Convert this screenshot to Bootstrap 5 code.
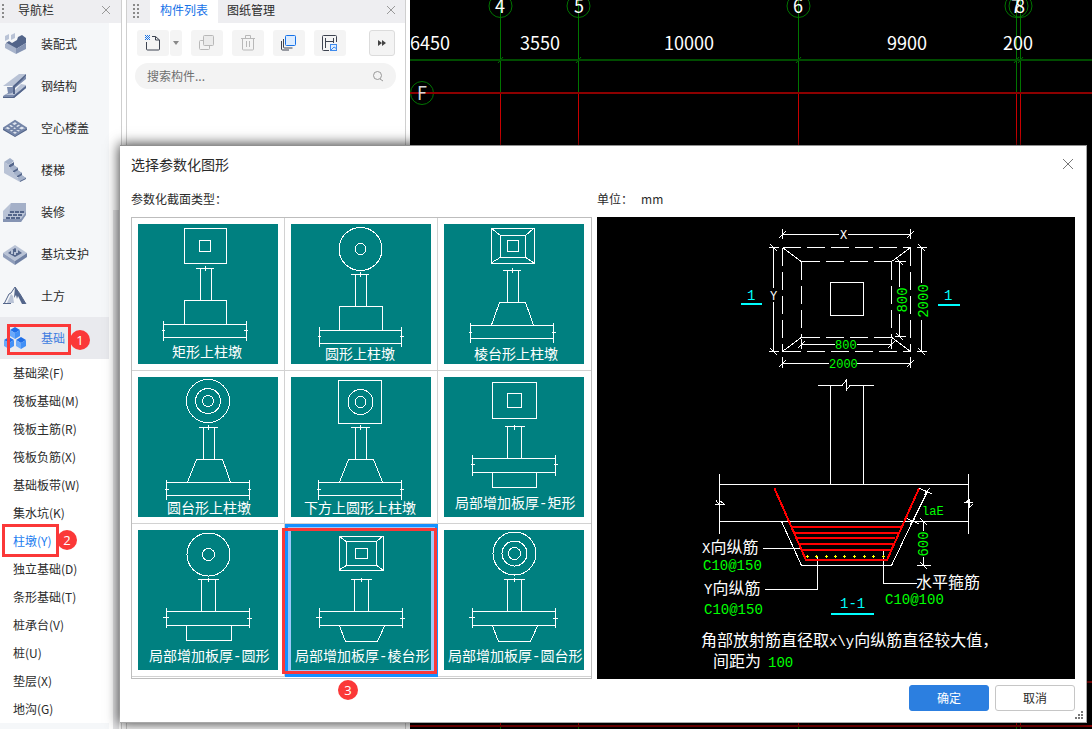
<!DOCTYPE html>
<html lang="zh-CN">
<head>
<meta charset="utf-8">
<meta name="viewport" content="width=device-width, initial-scale=1">
<title>选择参数化图形</title>
<link href="https://cdn.jsdelivr.net/npm/bootstrap@5.3.0/dist/css/bootstrap.min.css" rel="stylesheet">
<style>
  body { font-family: "Noto Sans CJK SC", sans-serif; font-size: 12px; line-height: 18px; color: #2b2b2b; background: #fff; }
  button, input { font: inherit; color: inherit; }
  a { color: inherit; text-decoration: none; }
  svg { display: block; }
  .strip { height: 23px; background: #eeeef1; flex: none; padding-bottom: 4px; }
  .plain-btn { border: 0; background: none; padding: 0; line-height: 1; }
  .nav-pane { width: 122px; border-right: 1px solid #cfcfcf; }
  .nav-list { width: 109px; background: #f5f7f9; }
  .nav-row { height: 42px; padding-left: 3px; gap: 14px; }
  .nav-row.current { background: #e9eaee; color: #3f7de0; }
  .sub-list { background: #fff; }
  .sub-list a { display: block; height: 28px; line-height: 28px; padding-left: 13px; white-space: nowrap; }
  .sub-list a.current { color: #1a7cf0; }
  .gutter-thumb { width: 6px; margin-top: 187px; background: #e4e4e6; }
  .list-pane { width: 280px; margin-left: 4px; border-left: 1px solid #cfcfcf; border-right: 1px solid #cfcfcf; }
  .tab-link { padding: 0 9px 4px 9px; margin-bottom: -4px; display: flex; align-items: center; }
  .tab-link.current { background: #fff; color: #1672e8; padding-left: 10px; padding-right: 10px; }
  .tool-row { padding: 7px 10px 0 10px; gap: 9px; }
  .tool-pair { gap: 1px; }
  .tool { width: 32px; height: 26px; border: 0; border-radius: 3px; background: #f4f4f4; padding: 0; display: flex; align-items: center; justify-content: center; }
  .tool.drop { width: 12px; }
  .tool.more { width: 26px; border: 1px solid #dcdcdc; }
  .search-box { margin: 7px 9px 0 8px; height: 26px; border-radius: 13px; background: #f3f3f3; padding: 0 12px; }
  .search-box input { border: 0; background: none; outline: 0; padding: 0; min-width: 0; }
  .search-box input::placeholder { color: #6f6f6f; opacity: 1; }
  .cad { background: #000; margin-left: 4px; min-width: 0; }
  .cad svg { width: 100%; height: 100%; }
  .dialog-box { position: absolute; left: 120px; right: 5px; top: 145px; background: #fff; border: 1px solid #a8a8a8; border-left: 0; border-top-color: #8f8f8f; box-shadow: 0 0 12px 1px rgba(0,0,0,.75); padding: 0 11px; }
  .dialog-head { height: 38px; padding-bottom: 2px; font-size: 14px; line-height: 20px; }
  .dialog-labels { height: 33px; padding-bottom: 4px; }
  .dialog-foot { padding: 6px 0 11px; gap: 6px; }
  .label-left { width: 466px; }
  .thumbs { width: 461px; flex: none; border: 1px solid #bdbdbd; display: grid; grid-template-columns: 153px 153px 1fr; grid-auto-rows: 153px; position: relative; }
  .shape-btn { border: 0; border-right: 1px solid #d2d2d2; border-bottom: 1px solid #d2d2d2; background: #fff; padding: 6px 0 0 6px; display: flex; align-items: flex-start; }
  .shape-btn:nth-child(3n) { border-right: 0; }
  .shape-btn.chosen { border: 3px solid #1590ff; background: #9cc9fb; padding: 3px 0 0 3px; }
  .shape-btn svg { width: 140px; height: 140px; flex: none; background: #008080; fill: none; stroke: #fff; shape-rendering: crispEdges; }
  .shape-btn text { fill: #fff; stroke: none; font: 400 14px "Liberation Mono", "Noto Sans CJK SC", monospace; }
  .preview { background: #000; height: 462px; min-width: 0; margin-left: 5px; }
  .preview svg { width: 100%; height: 100%; }
  .preview text { font: 400 14px "Liberation Mono", "Noto Sans CJK SC", monospace; stroke: none; }
  .preview .zh { font-size: 16px; }
  .preview .tiny { font-size: 12px; }
  .action { width: 80px; height: 26px; border-radius: 3px; padding: 0; font-size: 12px; line-height: 18px; }
  .action.ok { background: #2c7fe0; border-color: #2c7fe0; color: #fff; }
  .action.cancel { background: #fff; border-color: #c6c6c6; color: #2b2b2b; }
  .frame-mark { position: absolute; border: 3px solid #fb3838; pointer-events: none; }
  .step-mark { position: absolute; width: 20px; height: 20px; border-radius: 50%; background: #fb3838; color: #fff; font-family: "Open Sans", sans-serif; font-size: 13px; line-height: 20px; text-align: center; }
  .mark-1 { left: 7px; top: 7px; width: 64px; height: 31px; }
  .step-1 { left: 70px; top: 13px; }
  .mark-2 { left: 2px; top: -3px; width: 57px; height: 33px; }
  .step-2 { left: 57px; top: 3px; }
  .mark-3 { left: 150px; top: 310px; width: 155px; height: 146px; }
  .step-3 { left: 206px; top: 462px; }
  .grip { position: absolute; right: 3px; bottom: 3px; }
</style>
</head>
<body class="overflow-hidden">
<div class="d-flex vh-100 position-relative overflow-hidden">

  <nav class="nav-pane d-flex flex-column flex-shrink-0">
    <div class="strip d-flex align-items-center">
      <svg width="6" height="18" fill="#8a8a8a"><path d="M2 3h2v2H2zM2 7h2v2H2zM2 11h2v2H2zM2 15h2v2H2z"/></svg>
      <span class="ms-2 ps-1">导航栏</span>
      <button class="plain-btn ms-auto me-2" aria-label="关闭导航栏"><svg width="12" height="10" stroke="#999" fill="none"><path d="M1 1l8 8M9 1l-8 8"/></svg></button>
    </div>
    <div class="d-flex flex-grow-1">
      <div class="nav-list">
        <a href="#" class="nav-row d-flex align-items-center">
          <svg width="24" height="24"><path fill="#b9c3d6" d="M2 4l4-2v5l-4 2zM8 3l4-2v5l-4 2z"/><path fill="#53658a" d="M3 11l3-2 3 2 5-3 1-3 4-2 4 3v5l-10 6-10-5z"/><path fill="#a8b4cb" d="M2 12l2-1 9 5v6L2 16z"/><path fill="#8594b3" d="M13 17l10-6v6l-10 5z"/></svg>装配式</a>
        <a href="#" class="nav-row d-flex align-items-center">
          <svg width="24" height="24"><path fill="#b9c3d6" d="M0 12L16 0h7l-9 12H4z"/><path fill="#7c8cae" d="M4 13h5l14-11v3L12 14v6l11-9v3L11 24H0v-2l5-3z"/><path fill="#b9c3d6" d="M9 19l9-9 5 1-12 10H1z"/><path fill="#53658a" d="M12 13L23 2V0L10 12v8h2zM11 22l12-10v2L11 24H0v-1h10z"/></svg>钢结构</a>
        <a href="#" class="nav-row d-flex align-items-center">
          <svg width="24" height="24"><path fill="#53658a" d="M0 12l12 7 12-7v2l-12 7-12-7z"/><path fill="#dfe5ee" stroke="#7485a8" stroke-width="2" d="M1 12l11-7 11 7-11 7zM5 10l11 7M8 8l11 7M5 15l11-8M8 17l11-8"/></svg>空心楼盖</a>
        <a href="#" class="nav-row d-flex align-items-center">
          <svg width="24" height="24"><path fill="#b9c3d6" d="M1 4l5 3v3l4 2v3l4 2v3l3 1v3L1 15z"/><path fill="#53658a" d="M6 7l5-3v4l4 2v3l4 2v3l4 2v1l-6 3v-4l-3-1v-3l-4-2v-3l-4-2z"/><path fill="#a5b2ca" d="M1 4l6-4 4 3-5 4zM6 10l5-3 4 3-5 3zM10 15l5-3 4 3-5 3zM14 20l5-3 4 3-6 3z"/></svg>楼梯</a>
        <a href="#" class="nav-row d-flex align-items-center">
          <svg width="24" height="24"><path fill="#b9c3d6" d="M0 11l8-8h15v11l-5 8H0z"/><path fill="#8594b3" d="M8 3h15v10H6z" opacity=".4"/><path fill="#8594b3" d="M0 19h18l5-7v3l-5 7H0z"/><path stroke="#53658a" stroke-width="2" stroke-dasharray="4 1" d="M7 12h14M5 15h14M3 18h14"/></svg>装修</a>
        <a href="#" class="nav-row d-flex align-items-center">
          <svg width="24" height="24"><path fill="#b9c3d6" d="M0 11l12-8 12 8-12 8z"/><path fill="#8f9dba" d="M0 11l12 8v4L0 15z"/><path fill="#6f80a3" d="M24 11l-12 8v4l12-8z"/><path fill="#53658a" d="M5 11l7-5 7 5-7 4z"/><path fill="#b9c3d6" d="M8 8h2v4H8zM13 6h2v5h-2zM11 10h2v3h-2z"/></svg>基坑支护</a>
        <a href="#" class="nav-row d-flex align-items-center">
          <svg width="24" height="24"><path fill="#b9c3d6" d="M4 19l4-9 2 2 1 7z"/><path fill="none" stroke="#53658a" d="M1 20l5-10 2-1 4-6 5 7 6 10"/><path fill="#53658a" d="M12 3l5 7 6 10h-4l-4-8-1 3-1-4-2 3zM0 19h8v1H0z"/></svg>土方</a>
        <div class="position-relative">
          <a href="#" class="nav-row current d-flex align-items-center">
            <svg width="24" height="24"><path fill="#1f6fe8" d="M7 4l5-3 5 3-5 3zM1 14l5-3 5 3-5 3zM13 14l5-3 5 3-5 3z"/><path fill="#69a9fb" d="M7 4l5 3v6l-5-3zM1 14l5 3v6l-5-3zM13 14l5 3v6l-5-3z"/><path fill="#4290f6" d="M17 4l-5 3v6l5-3zM11 14l-5 3v6l5-3zM23 14l-5 3v6l5-3z"/></svg>基础</a>
          <span class="frame-mark mark-1"></span><span class="step-mark step-1">1</span>
        </div>
        <div class="sub-list">
          <a href="#">基础梁(F)</a>
          <a href="#">筏板基础(M)</a>
          <a href="#">筏板主筋(R)</a>
          <a href="#">筏板负筋(X)</a>
          <a href="#">基础板带(W)</a>
          <a href="#">集水坑(K)</a>
          <div class="position-relative"><a href="#" class="current">柱墩(Y)</a><span class="frame-mark mark-2"></span><span class="step-mark step-2">2</span></div>
          <a href="#">独立基础(D)</a>
          <a href="#">条形基础(T)</a>
          <a href="#">桩承台(V)</a>
          <a href="#">桩(U)</a>
          <a href="#">垫层(X)</a>
          <a href="#">地沟(G)</a>
        </div>
      </div>
      <div class="gutter-thumb ms-1"></div>
    </div>
  </nav>

  <section class="list-pane flex-shrink-0">
    <div class="strip d-flex">
      <svg class="align-self-center ms-1 me-2" width="11" height="18" fill="#8a8a8a"><path d="M2 3h2v2H2zM2 7h2v2H2zM2 11h2v2H2zM2 15h2v2H2zM6 3h2v2H6zM6 7h2v2H6zM6 11h2v2H6zM6 15h2v2H6z"/></svg>
      <a href="#" class="tab-link current">构件列表</a>
      <a href="#" class="tab-link">图纸管理</a>
      <button class="plain-btn ms-auto me-2" aria-label="关闭构件列表"><svg width="12" height="10" stroke="#999" fill="none"><path d="M2 1l8 8M10 1l-8 8"/></svg></button>
    </div>
    <div class="tool-row d-flex">
      <div class="tool-pair d-flex">
        <button class="tool" aria-label="新建"><svg width="18" height="18" fill="none" stroke="#3d4350"><path d="M2.500 8v7q0 1 1 1h11q1 0 1-1V6l-4-3.500H8M11.500 2.500V6h4"/><path stroke="#1672e8" stroke-dasharray="1 1" d="M1 1.500h5M2 2.500h4M1 3.500h5M2 4.500h4M1 5.500h5"/></svg></button>
        <button class="tool drop" aria-label="新建选项"><svg width="6" height="4"><path fill="#888" d="M0 0h6L3 4z"/></svg></button>
      </div>
      <button class="tool" aria-label="复制"><svg width="18" height="18" fill="#ebebeb" stroke="#b8b8b8"><rect x="1.500" y="6.500" width="10" height="9" rx="1" fill="none"/><rect x="5.500" y="1.500" width="10" height="10" rx="1"/></svg></button>
      <button class="tool" aria-label="删除"><svg width="18" height="18" fill="none" stroke="#b8b8b8"><path d="M2 4.500h14M6.500 4V1.500h5V4M3.500 5v10q0 1 1 1h9q1 0 1-1V5M7.500 7v6M10.500 7v6"/></svg></button>
      <button class="tool" aria-label="层间复制"><svg width="18" height="18" fill="none" stroke="#3d4350"><path d="M3.500 5v8q0 1 1 1h8M1.500 7v8q0 1 1 1H9"/><rect x="5.500" y="1.500" width="10" height="10" rx="1" stroke="#1672e8" fill="#dcecff"/></svg></button>
      <button class="tool" aria-label="存档"><svg width="18" height="18" fill="none" stroke="#3d4350"><path d="M8 16.500H2.500q-1 0-1-1v-13q0-1 1-1h12q1 0 1 1V8M4.500 4v10M4.500 7.500h8M12.500 4v5"/><rect x="9.500" y="10.500" width="6" height="6" stroke="#3f8aec" fill="#dcecff"/><path d="M10 16l3-3 3 2" stroke="#3f8aec"/></svg></button>
      <button class="tool more ms-auto" aria-label="更多"><svg width="8" height="6"><path fill="#444" d="M0 0l4 3-4 3zM4 0l4 3-4 3z"/></svg></button>
    </div>
    <div class="search-box d-flex align-items-center">
      <input class="flex-grow-1" type="text" placeholder="搜索构件..." aria-label="搜索构件">
      <svg width="12" height="12" fill="none" stroke="#999"><circle cx="5.500" cy="5.500" r="4"/><path d="M8 9l3 2"/></svg>
    </div>
  </section>

  <main class="cad flex-grow-1">
    <svg viewBox="410 0 682 729" preserveAspectRatio="xMinYMin slice" fill="none">
      <g stroke="#007400">
        <path d="M500.500 0V93M578.500 0V93M798.500 0V93M1016.500 0V93M1020.500 0V93M500.500 727v2M578.500 727v2M798.500 727v2M1016.500 727v2M1020.500 727v2"/>
        <path d="M498 63l5-6M576 63l5-6M796 63l5-6M1014 63l5-6M1018 63l5-6"/>
        <path stroke="#004c00" stroke-width="2" d="M410 60H1092"/>
        <circle cx="500.500" cy="6" r="11.500"/><circle cx="578.500" cy="6" r="11.500"/><circle cx="798.500" cy="6" r="11.500"/><circle cx="1016.500" cy="6" r="11.500"/><circle cx="1020.500" cy="6" r="11.500"/><circle cx="422" cy="93" r="11.500"/>
      </g>
      <g stroke="#c80000">
        <path d="M500.500 94V727M578.500 94V727M798.500 94V727M1016.500 94V727M1020.500 94V727"/>
        <path stroke="#8c0000" stroke-width="2" d="M410 93H1092M410 726H1092M1080 682H1092"/>
      </g>
      <g fill="#fff" font-size="18" font-family="Noto Sans CJK SC, sans-serif">
        <text x="410" y="50">6450</text><text x="520" y="50">3550</text><text x="664" y="50">10000</text><text x="887" y="50">9900</text><text x="1003" y="50">200</text>
        <g text-anchor="middle"><text x="500" y="13">4</text><text x="579" y="13">5</text><text x="798" y="13">6</text><text x="1016" y="13">7</text><text x="1020" y="13">8</text></g>
        <text x="417" y="100" fill="#d8d8d8">F</text>
      </g>
    </svg>
  </main>

  <div class="dialog-box" role="dialog" aria-labelledby="dlgTitle">
    <div class="dialog-head d-flex align-items-center">
      <span id="dlgTitle">选择参数化图形</span>
      <button class="plain-btn ms-auto" aria-label="关闭"><svg width="13" height="12" stroke="#777" fill="none"><path d="M1 1l10 10M11 1L1 11"/></svg></button>
    </div>
    <div class="dialog-labels d-flex align-items-center">
      <span class="label-left">参数化截面类型：</span><span>单位：</span><span class="ms-2">mm</span>
    </div>
    <div class="d-flex">
      <div class="thumbs">
        <button class="shape-btn"><svg viewBox="0 0 140 140"><path d="M46.500 4.500h42v35h-42zM61.500 16.500h11v11h-11zM58 44.500h18M67.500 42v5M62.500 45v31M73.500 45v31M46.500 100V76.500h42V100M25.500 100.500h83M25.500 113.500h83M25.500 97v20M108.500 97v20M24 106.500h3M106 106.500h4"/><text x="34" y="133">矩形上柱墩</text></svg></button>
        <button class="shape-btn"><svg viewBox="0 0 140 140"><circle cx="69.500" cy="25" r="21.500"/><circle cx="69.500" cy="25" r="5.500"/><path d="M60 50.500h18M69.500 48v5M64.500 51v31M75.500 51v31M48.500 106V82.500h43V106M28.500 106.500h82M28.500 119.500h82M28.500 103v20M110.500 103v20M27 112.500h3M109 112.500h4"/><text x="34" y="135">圆形上柱墩</text></svg></button>
        <button class="shape-btn"><svg viewBox="0 0 140 140"><path d="M47.500 4.500h43v35h-43zM56.500 11.500h25v22h-25zM63.500 16.500h11v11h-11zM47 4l10 8M90 4l-9 8M47 39l10-6M90 39l-9-6M59 46.500h18M68.500 44v5M63.500 47v31M74.500 47v31M47.500 101l8-22.500h26l8 22.500M26.500 101.500h83M26.500 114.500h83M26.500 99v20M109.500 99v20M25 108.500h3M108 108.500h4"/><text x="30" y="135">棱台形上柱墩</text></svg></button>
        <button class="shape-btn"><svg viewBox="0 0 140 140"><circle cx="70" cy="24" r="21.500"/><circle cx="70" cy="24" r="12.500"/><circle cx="70" cy="24" r="5.500"/><path d="M61 50.500h19M70.500 48v5M65.500 51v31M76.500 51v31M49.500 105l9-22.500h26l8 22.500M28.500 105.500h83M28.500 118.500h83M28.500 103v20M111.500 103v20M27 112.500h4M110 112.500h3"/><text x="29" y="136">圆台形上柱墩</text></svg></button>
        <button class="shape-btn"><svg viewBox="0 0 140 140"><circle cx="69.500" cy="25" r="12.500"/><circle cx="69.500" cy="25" r="5.500"/><path d="M47.500 3.500h43v43h-43zM60 50.500h19M69.500 48v5M64.500 51v31M75.500 51v31M48.500 105l9-22.500h25l9 22.500M27.500 105.500h83M27.500 118.500h83M27.500 103v20M110.500 103v20M26 112.500h4M109 112.500h4"/><text x="13" y="136">下方上圆形上柱墩</text></svg></button>
        <button class="shape-btn"><svg viewBox="0 0 140 140"><path d="M48.500 5.500h44v36h-44zM63.500 16.500h14v14h-14zM61 49.500h20M70.500 48v5M63.500 50v31M77.500 50v31M28.500 81.500h83M28.500 95.500h83M28.500 78v21M111.500 78v21M27 87.500h4M110 87.500h4M48.500 96v14.500h44V96"/><text x="11" y="131">局部增加板厚-矩形</text></svg></button>
        <button class="shape-btn"><svg viewBox="0 0 140 140"><circle cx="70.500" cy="24.500" r="21.500"/><circle cx="70.500" cy="24.500" r="6"/><path d="M60 49.500h21M70.500 48v4M63.500 50v31M77.500 50v31M28.500 81.500h83M28.500 95.500h83M28.500 78v20M111.500 78v20M25 87.500h6M109 88.500h5M48.500 96v14.500h45V96"/><text x="11" y="131">局部增加板厚-圆形</text></svg></button>
        <button class="shape-btn chosen"><svg viewBox="0 0 140 140"><path d="M48.500 6.500h44v34h-44zM55.500 11.500h30v24h-30zM64.500 18.500h12v10h-12zM48 6l8 6M92 6l-7 6M48 40l8-5M92 40l-7-5M60 49.500h21M70.500 48v4M63.500 50v31M77.500 50v31M28.500 81.500h83M28.500 95.500h83M28.500 78v20M111.500 78v20M25 87.500h6M109 88.500h5M48.500 96l6 15.500h32l7-15.500"/><text x="4" y="131">局部增加板厚-棱台形</text></svg></button>
        <button class="shape-btn"><svg viewBox="0 0 140 140"><circle cx="70.500" cy="23.500" r="21.500"/><circle cx="70.500" cy="23.500" r="12.500"/><circle cx="70.500" cy="23.500" r="6"/><path d="M60 49.500h21M70.500 48v4M63.500 50v31M77.500 50v31M28.500 81.500h83M28.500 95.500h83M28.500 78v20M111.500 78v20M25 87.500h6M109 88.500h5M48.500 96l6 15.500h32l7-15.500"/><text x="4" y="131">局部增加板厚-圆台形</text></svg></button>
        <span class="frame-mark mark-3"></span><span class="step-mark step-3">3</span>
      </div>
      <div class="preview flex-grow-1">
        <svg viewBox="597 217 478 462" fill="none" stroke="#fff" shape-rendering="crispEdges">
          <!-- plan view -->
          <g stroke-dasharray="18 6">
            <path d="M782.500 247.500H910.500M782.500 351.500H910.500M782.500 247.500V351.500M910.500 247.500V351.500"/>
            <path d="M801.500 261.500H891.500M801.500 337.500H891.500M801.500 261.500V337.500M891.500 261.500V337.500"/>
          </g>
          <path d="M830.500 282.500h33v33h-33zM783 248l19 14M910 248l-19 14M783 351l19-14M910 351l-19-14"/>
          <path d="M782.500 234.500H839M848 234.500H910.500M782.500 229v10M910.500 229v10M779 238l7-7M907 238l7-7"/>
          <path d="M773.500 247.500V288M773.500 302V351.500M769 247.500h10M769 351.500h10M770 244l7 7M770 348l7 7"/>
          <path d="M801.500 344.500H835M857 344.500H891.500M801.500 339v10M891.500 339v10M798 348l7-7M888 348l7-7"/>
          <path d="M782.500 363.500H829M857 363.500H910.500M782.500 357v11M910.500 357v11M779 367l7-7M907 367l7-7"/>
          <path d="M899.500 261.500V287M899.500 314V336.500M895 261.500h11M895 336.500h11M896 258l7 7M896 333l7 7"/>
          <path d="M921.500 247.500V283M921.500 320V351.500M917 247.500h10M917 351.500h10M918 244l7 7M918 348l7 7"/>
          <!-- section view -->
          <path d="M818 385.500h24l4-5v10l4-5h24M830.500 386v98M863.500 386v98M719.500 484.500h249M719.500 521.500h249M719.500 474v60M715 504.500h4l-3-4M719 500l5 4h-4M968.500 474v60M964 502.500h9M965 503l4-3v8l4-4"/>
          <path d="M781.500 521.500l20 44h90l21-44 15-30M919 488l13 6M924 495l6-7M906 518l13 6M910 525l5-7"/>
          <path d="M923.500 522v9M923.500 557v9M917 565.500h14M920 562l7 7M920 518l7 7M763 548.500h38M765 589.500h52.500V557M883.500 551v32.500H917"/>
          <g stroke="#f00" stroke-width="2">
            <path d="M774.500 488.500L806 560h81l32-71.500"/>
            <path d="M792 527h110M794 533h105M797 538h98M799 544h94M802 550h89"/>
          </g>
          <path stroke="#ff0" stroke-width="1" d="M806 556.500h3M815 556.500h3M825 556.500h3M834 556.500h3M843 556.500h3M853 556.500h3M863 556.500h3M872 556.500h3M882 556.500h3M807.500 555v3M816.500 555v3M826.500 555v3M835.500 555v3M844.500 555v3M854.500 555v3M864.500 555v3M873.500 555v3M883.500 555v3"/>
          <path stroke="#0ff" stroke-width="2" d="M741 304h21M938 305h22M831 614h43"/>
          <g fill="#fff">
            <text class="tiny" x="840" y="239">X</text><text class="tiny" x="770" y="300">Y</text>
            <text class="zh" x="702" y="553"><tspan font-size="14">X</tspan>向纵筋</text>
            <text class="zh" x="704" y="594"><tspan font-size="14">Y</tspan>向纵筋</text>
            <text class="zh" x="916" y="588">水平箍筋</text>
            <text class="zh" x="701" y="646">角部放射筋直径取<tspan font-size="14">x\y</tspan>向纵筋直径较大值，</text>
            <text class="zh" x="713" y="667">间距为</text>
          </g>
          <g fill="#0f0">
            <text class="tiny" x="835" y="349">800</text><text class="tiny" x="829" y="368">2000</text>
            <text text-anchor="middle" transform="translate(907 300) rotate(-90)">800</text>
            <text text-anchor="middle" transform="translate(928 301) rotate(-90)">2000</text>
            <text text-anchor="middle" transform="translate(928 544) rotate(-90)">600</text>
            <text class="tiny" x="922" y="515">laE</text>
            <text x="703" y="570">C10@150</text><text x="704" y="614">C10@150</text><text x="885" y="604">C10@100</text><text x="768" y="667">100</text>
          </g>
          <g fill="#0ff"><text x="747" y="300">1</text><text x="944" y="300">1</text><text x="840" y="608">1-1</text></g>
        </svg>
      </div>
    </div>
    <div class="dialog-foot d-flex justify-content-end">
      <button class="btn action ok">确定</button>
      <button class="btn action cancel">取消</button>
    </div>
    <svg class="grip" width="8" height="8" fill="#777"><path d="M6 0h2v2H6zM3 3h2v2H3zM6 3h2v2H6zM0 6h2v2H0zM3 6h2v2H3zM6 6h2v2H6z"/></svg>
  </div>
</div>
<script src="https://cdn.jsdelivr.net/npm/bootstrap@5.3.0/dist/js/bootstrap.bundle.min.js"></script>
</body>
</html>
